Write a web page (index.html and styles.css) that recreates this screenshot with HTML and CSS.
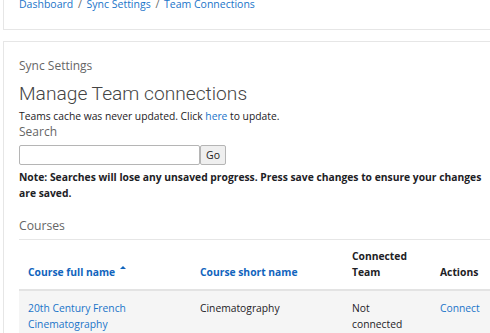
FILE: index.html
```html
<!DOCTYPE html>
<html lang="en">
<head>
    <meta charset="UTF-8">
    <title>Team Connections</title>
    <link rel="stylesheet" href="styles.css">
</head>
<body>
    <div class="card crumbs">
        <a href="#">Dashboard</a> <span class="sep">/</span>
        <a href="#">Sync Settings</a> <span class="sep">/</span>
        <a href="#">Team Connections</a>
    </div>

    <div class="card main">
        <div class="subtitle">Sync Settings</div>
        <h2>Manage Team connections</h2>
        <p class="cache">Teams cache was never updated. Click <a href="#">here</a> to update.</p>
        <label class="search-label" for="search">Search</label>
        <form class="search-form">
            <input type="text" id="search">
            <button type="submit">Go</button>
        </form>
        <p class="note">Note: Searches will lose any unsaved progress. Press save changes to ensure your changes are saved.</p>

        <div class="section-title">Courses</div>
        <table class="courses">
            <colgroup>
                <col class="c1">
                <col class="c2">
                <col class="c3">
                <col class="c4">
            </colgroup>
            <thead>
                <tr>
                    <th><a href="#">Course full name</a><span class="sort"></span></th>
                    <th><a href="#">Course short name</a></th>
                    <th>Connected Team</th>
                    <th>Actions</th>
                </tr>
            </thead>
            <tbody>
                <tr>
                    <td><a href="#">20th Century French Cinematography</a></td>
                    <td>Cinematography</td>
                    <td>Not connected</td>
                    <td><a href="#">Connect</a></td>
                </tr>
            </tbody>
        </table>
    </div>
</body>
</html>
```

FILE: styles.css
```css
/* CSS */
body {
    margin: 0;
    font-family: "Open Sans", "Noto Sans", sans-serif;
    font-size: 10.3px;
    color: #1d2125;
    background: #fff;
}
a {
    color: #1a74c9;
    text-decoration: none;
}
.card {
    margin-left: 3px;
    margin-right: -20px;
    border: 1px solid #e6e6e6;
    background: #fff;
}
.crumbs {
    margin-top: -4px;
    padding: 0 15px 17px;
    border-top: none;
    font-size: 10.5px;
    line-height: 16px;
    height: 16px;
    color: #666;
}
.crumbs .sep {
    padding: 0 2px;
}
.main {
    margin-top: 11px;
    padding: 15px 15px 0;
}
.subtitle {
    font-size: 12px;
    line-height: 18px;
    color: #666;
}
h2 {
    margin: 0;
    padding-top: 5px;
    font-family: Roboto, "Open Sans", sans-serif;
    font-size: 19.2px;
    font-weight: 300;
    line-height: 28px;
    color: #444;
}
.cache {
    margin: 0;
    line-height: 16px;
}
.search-label {
    display: block;
    font-size: 12px;
    line-height: 16px;
    color: #666;
}
.search-form {
    display: flex;
    margin: 5px 0 0;
}
.search-form input {
    box-sizing: border-box;
    width: 181px;
    height: 20px;
    padding: 0 2px;
    border: 1px solid #b5b5b5;
    border-radius: 2px;
}
.search-form button {
    box-sizing: border-box;
    height: 20px;
    width: 26px;
    padding: 0;
    font-family: inherit;
    font-size: 10.5px;
    color: #222;
    background: #efefef;
    border: 1px solid #b5b5b5;
    border-radius: 2px;
}
.note {
    margin: 4px 0 0;
    font-weight: bold;
    line-height: 16px;
}
.section-title {
    margin-top: 17px;
    font-size: 12.2px;
    line-height: 16px;
    color: #666;
}
.courses {
    margin-top: 5px;
    border-collapse: collapse;
    table-layout: fixed;
    width: 482px;
}
.courses .c1 { width: 172px; }
.courses .c2 { width: 152px; }
.courses .c3 { width: 88px; }
.courses th {
    text-align: left;
    vertical-align: bottom;
    padding: 8px 9px 9px;
    line-height: 16px;
    border-top: 1px solid #e6e6e6;
    border-bottom: 2px solid #e3e3e3;
    color: #1d2125;
}
.courses th a {
    color: #1164bd;
}
.courses .sort {
    display: inline-block;
    margin-left: 5px;
    vertical-align: 7px;
    border-left: 3px solid transparent;
    border-right: 3px solid transparent;
    border-bottom: 3px solid #1164bd;
}
.courses td {
    vertical-align: top;
    padding: 9px 9px;
    line-height: 16px;
    background: #f5f5f5;
}
```
